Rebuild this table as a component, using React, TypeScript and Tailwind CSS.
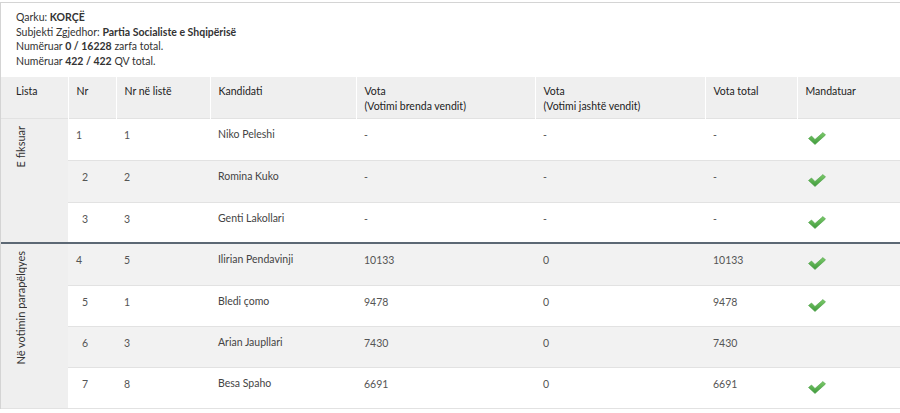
const ROWS = [
  { nr: 1, nrList: 1, name: 'Niko Peleshi', inside: '-', outside: '-', total: '-', mandate: true, shift: false, h: 'h-[42px]' },
  { nr: 2, nrList: 2, name: 'Romina Kuko', inside: '-', outside: '-', total: '-', mandate: true, shift: true, h: 'h-[42px]' },
  { nr: 3, nrList: 3, name: 'Genti Lakollari', inside: '-', outside: '-', total: '-', mandate: true, shift: true, h: 'h-[40px]' },
  { nr: 4, nrList: 5, name: 'Ilirian Pendavinji', inside: '10133', outside: '0', total: '10133', mandate: true, shift: false, h: 'h-[43px]' },
  { nr: 5, nrList: 1, name: 'Bledi çomo', inside: '9478', outside: '0', total: '9478', mandate: true, shift: true, h: 'h-[41px]' },
  { nr: 6, nrList: 3, name: 'Arian Jaupllari', inside: '7430', outside: '0', total: '7430', mandate: false, shift: true, h: 'h-[41px]' },
  { nr: 7, nrList: 8, name: 'Besa Spaho', inside: '6691', outside: '0', total: '6691', mandate: true, shift: true, h: 'h-[41px]' },
]

function Check() {
  return (
    <svg width="20" height="15" viewBox="0 0 20 15" className="block">
      <defs>
        <linearGradient id="chk" x1="0" y1="0" x2="0" y2="1">
          <stop offset="0" stopColor="#7dcb6a" />
          <stop offset="1" stopColor="#3f9a3c" />
        </linearGradient>
      </defs>
      <path d="M1.5 7.5 L4.5 5 L8 8.5 L16 1.5 L18.5 4 L8 13.5 Z" fill="url(#chk)" stroke="#4a9e45" strokeWidth="0.6" strokeLinejoin="round" />
    </svg>
  )
}

function GroupLabel({ text }: { text: string }) {
  return (
    <div className="pl-[13px] pt-[7px]">
      <div className="rotate-180 text-[11px] leading-[13px] text-[#333] [writing-mode:vertical-rl]">{text}</div>
    </div>
  )
}

export default function App() {
  return (
    <div className="h-[413px] w-[900px] overflow-hidden bg-white pt-[2px] font-['Lato',sans-serif]">
      <div className="border-l border-t border-[#d4d4d4]">
        {/* Info */}
        <div className="px-[15px] pt-[7px] pb-[8px] text-[10.5px] leading-[14.7px] text-[#333]">
          <div>
            Qarku: <b>KORÇË</b>
          </div>
          <div>
            Subjekti Zgjedhor: <b>Partia Socialiste e Shqipërisë</b>
          </div>
          <div>
            Numëruar <b>0 / 16228</b> zarfa total.
          </div>
          <div>
            Numëruar <b>422 / 422</b> QV total.
          </div>
        </div>

        <table className="w-[899px] table-fixed border-collapse text-[10.5px] text-[#444]">
          <colgroup>
            <col className="w-[67px]" />
            <col className="w-[48px]" />
            <col className="w-[94px]" />
            <col className="w-[146px]" />
            <col className="w-[179px]" />
            <col className="w-[170px]" />
            <col className="w-[92px]" />
            <col className="w-[103px]" />
          </colgroup>
          <thead>
            <tr className="h-[42px] bg-[#efefef] text-left align-top text-[#222]">
              <th className="border-r border-white pl-[15px] pr-[8px] pt-[7px] font-normal leading-[15px]">Lista</th>
              {['Nr', 'Nr në listë', 'Kandidati'].map((h) => (
                <th key={h} className="border-r border-white px-[8px] pt-[7px] font-normal leading-[15px]">
                  {h}
                </th>
              ))}
              <th className="border-r border-white px-[8px] pt-[7px] font-normal leading-[15px]">
                Vota
                <br />
                (Votimi brenda vendit)
              </th>
              <th className="border-r border-white px-[8px] pt-[7px] font-normal leading-[15px]">
                Vota
                <br />
                (Votimi jashtë vendit)
              </th>
              <th className="border-r border-white px-[8px] pt-[7px] font-normal leading-[15px]">Vota total</th>
              <th className="px-[8px] pt-[7px] font-normal leading-[15px]">Mandatuar</th>
            </tr>
          </thead>
          <tbody>
            {ROWS.map((r, i) => (
              <tr
                key={r.nr}
                className={
                  (i % 2 === 1 ? 'bg-[#f2f2f2] ' : 'bg-white ') +
                  (i === 3 ? 'border-t-2 border-[#5c6874] ' : 'border-t border-[#e2e2e2] ') +
                  (i === ROWS.length - 1 ? 'border-b border-b-[#e2e2e2] ' : '') +
                  r.h +
                  ' align-top'
                }
              >
                {i === 0 && (
                  <td rowSpan={3} className="bg-[#efefef] p-0 align-top">
                    <GroupLabel text="E fiksuar" />
                  </td>
                )}
                {i === 3 && (
                  <td rowSpan={4} className="bg-[#efefef] p-0 align-top">
                    <GroupLabel text="Në votimin parapëlqyes" />
                  </td>
                )}
                <td className={(r.shift ? 'pl-[14px] ' : 'pl-[8px] ') + 'pt-[9px] leading-[15px] text-[#555]'}>{r.nr}</td>
                <td className="px-[8px] pt-[9px] leading-[15px] text-[#555]">{r.nrList}</td>
                <td className="px-[8px] pt-[8px] leading-[15px] text-[#444]">{r.name}</td>
                <td className="px-[8px] pt-[9px] leading-[15px] text-[#555]">{r.inside}</td>
                <td className="px-[8px] pt-[9px] leading-[15px] text-[#555]">{r.outside}</td>
                <td className="px-[8px] pt-[9px] leading-[15px] text-[#555]">{r.total}</td>
                <td className="pl-[10px] pt-[12px]">{r.mandate && <Check />}</td>
              </tr>
            ))}
          </tbody>
        </table>
      </div>
    </div>
  )
}
